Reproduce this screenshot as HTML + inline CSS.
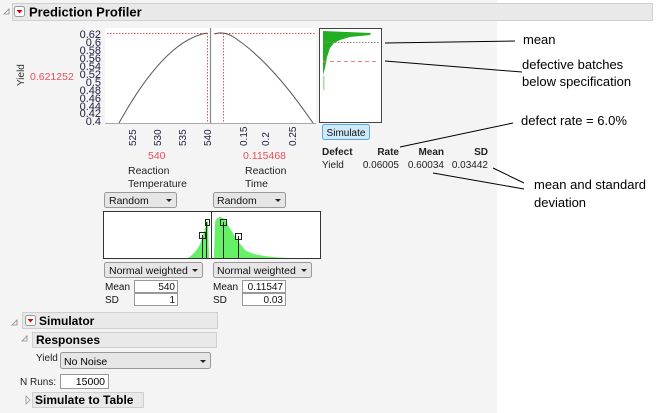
<!DOCTYPE html>
<html><head><meta charset="utf-8"><style>
html,body{margin:0;padding:0;width:666px;height:413px;overflow:hidden;background:#fff}
svg{display:block;font-family:"Liberation Sans",sans-serif}
</style></head><body>
<svg width="666" height="413" viewBox="0 0 666 413" xmlns="http://www.w3.org/2000/svg">
<rect x="0" y="0" width="497" height="413" fill="#f4f4f4"/>
<!-- header -->
<rect x="12.5" y="3.5" width="640" height="17" fill="#e9e9e9" stroke="#cfcfcf"/>
<path d="M4 14 L9 9 L9 14 Z" fill="none" stroke="#888" stroke-width="0.8"/>
<rect x="14.5" y="6.5" width="10" height="10" rx="2" fill="#fff" stroke="#999"/>
<path d="M16.5 10 L22.5 10 L19.5 13.5 Z" fill="#d00"/>
<text x="29" y="16.5" font-size="13" font-weight="bold" fill="#000">Prediction Profiler</text>
<!-- y axis -->
<text transform="translate(24,86) rotate(-90)" font-size="10" fill="#333">Yield</text>
<text x="30" y="80" font-size="10.5" fill="#e8505b">0.621252</text>
<g font-size="11" fill="#224" text-anchor="end">
<text x="101" y="38">0.62</text><text x="101" y="46">0.6</text><text x="101" y="54">0.58</text><text x="101" y="62">0.56</text><text x="101" y="70">0.54</text><text x="101" y="78">0.52</text><text x="101" y="86">0.5</text><text x="101" y="94">0.48</text><text x="101" y="102">0.46</text><text x="101" y="110">0.44</text><text x="101" y="117">0.42</text><text x="101" y="125">0.4</text>
</g>
<!-- plots -->
<rect x="105" y="28" width="104" height="95" fill="#fff"/>
<rect x="212" y="28" width="104" height="95" fill="#fff"/>
<line x1="210.5" y1="28" x2="210.5" y2="123" stroke="#888"/>
<line x1="105" y1="123.5" x2="316" y2="123.5" stroke="#aaa"/>
<line x1="107" y1="33.5" x2="207" y2="33.5" stroke="#e8505b" stroke-dasharray="1.5,1.5"/>
<line x1="207.5" y1="33" x2="207.5" y2="122" stroke="#e8505b" stroke-dasharray="1.5,1.5"/>
<line x1="214" y1="33.5" x2="315" y2="33.5" stroke="#e8505b" stroke-dasharray="1.5,1.5"/>
<line x1="223.5" y1="33" x2="223.5" y2="122" stroke="#e8505b" stroke-dasharray="1.5,1.5"/>
<path d="M119 123 Q165 40 207 33" fill="none" stroke="#555"/>
<path d="M215 34 Q222 31 232 36 Q270 60 313 123" fill="none" stroke="#555"/>
<g font-size="10" fill="#224">
<text transform="translate(136,146) rotate(-90)">525</text>
<text transform="translate(161,146) rotate(-90)">530</text>
<text transform="translate(186,146) rotate(-90)">535</text>
<text transform="translate(211,146) rotate(-90)">540</text>
<text transform="translate(247,146) rotate(-90)">0.15</text>
<text transform="translate(269,146) rotate(-90)">0.2</text>
<text transform="translate(296,146) rotate(-90)">0.25</text>
</g>
<text x="148" y="159" font-size="10.5" fill="#e8505b">540</text>
<text x="243" y="159" font-size="10.5" fill="#e8505b">0.115468</text>
<g font-size="10.5" fill="#222">
<text x="128" y="174">Reaction</text><text x="128" y="187">Temperature</text>
<text x="245" y="174">Reaction</text><text x="245" y="187">Time</text>
</g>
<!-- sim dist box -->
<rect x="319.5" y="28.5" width="62" height="94" fill="#fff" stroke="#444"/>
<path d="M323 32 L323 75 L325 68 L327 57 L330 48 L334 43 L340 40 L350 37 L370 35 L371 33 L323 31 Z" fill="#22b022"/>
<rect x="323" y="76" width="1.5" height="14" fill="#9ee09e"/>
<line x1="323" y1="42.5" x2="379" y2="42.5" stroke="#888" stroke-dasharray="1.5,1.5"/>
<line x1="323" y1="61.5" x2="379" y2="61.5" stroke="#e8808b" stroke-dasharray="4,3"/>
<!-- simulate button -->
<rect x="322.5" y="124.5" width="47" height="15" rx="2" fill="#cfe9f8" stroke="#5aa9d8"/>
<text x="346" y="136" font-size="10" text-anchor="middle" fill="#111">Simulate</text>
<g font-size="10" fill="#222">
<text x="322" y="155" font-weight="bold">Defect</text>
<text x="399" y="155" font-weight="bold" text-anchor="end">Rate</text>
<text x="444" y="155" font-weight="bold" text-anchor="end">Mean</text>
<text x="488" y="155" font-weight="bold" text-anchor="end">SD</text>
<text x="322" y="168">Yield</text>
<text x="399" y="168" text-anchor="end">0.06005</text>
<text x="444" y="168" text-anchor="end">0.60034</text>
<text x="488" y="168" text-anchor="end">0.03442</text>
</g>
<!-- annotations -->
<g stroke="#000" stroke-width="1">
<line x1="385" y1="43" x2="515" y2="41"/>
<line x1="385" y1="61" x2="522" y2="72"/>
<line x1="400" y1="147" x2="513" y2="123"/>
<line x1="433" y1="173" x2="524" y2="189"/>
<line x1="493" y1="168" x2="524" y2="183"/>
</g>
<g font-size="13" fill="#000">
<text x="523" y="44">mean</text>
<text x="522" y="69">defective batches</text>
<text x="522" y="86">below specification</text>
<text x="521" y="125">defect rate = 6.0%</text>
<text x="534" y="189">mean and standard</text>
<text x="534" y="207">deviation</text>
</g>
<!-- dropdowns -->
<g font-size="10.5" fill="#111">
<rect x="104.5" y="192.5" width="72" height="15" rx="2" fill="#e6e6e6" stroke="#999"/>
<text x="109" y="204">Random</text><path d="M166 199 L172 199 L169 202 Z" fill="#222"/>
<rect x="213.5" y="192.5" width="72" height="15" rx="2" fill="#e6e6e6" stroke="#999"/>
<text x="217" y="204">Random</text><path d="M275 199 L281 199 L278 202 Z" fill="#222"/>
</g>
<rect x="103.5" y="211.5" width="217" height="47" fill="#fff" stroke="#333"/>
<line x1="211.5" y1="211" x2="211.5" y2="258" stroke="#333"/>
<path d="M188 258 Q200 250 203 235 L206 225 L208 220 L209 258 Z" fill="#66f066"/>
<path d="M214 258 L215 222 Q219 213 225 220 Q235 238 245 250 Q255 257 290 258 Z" fill="#66f066"/>
<line x1="202.5" y1="235" x2="202.5" y2="258" stroke="#222"/>
<line x1="206.5" y1="222" x2="206.5" y2="258" stroke="#222"/>
<line x1="223.5" y1="222" x2="223.5" y2="258" stroke="#222"/>
<line x1="238.5" y1="236" x2="238.5" y2="258" stroke="#222"/>
<g fill="none" stroke="#222"><rect x="199.5" y="232.5" width="6" height="6"/><rect x="205.5" y="219.5" width="4" height="6"/><rect x="220.5" y="219.5" width="6" height="6"/><rect x="235.5" y="233.5" width="6" height="6"/></g>
<g font-size="10.5" fill="#111">
<rect x="104.5" y="262.5" width="98" height="15" rx="2" fill="#e6e6e6" stroke="#999"/>
<text x="109" y="274">Normal weighted</text><path d="M192 269 L198 269 L195 272 Z" fill="#222"/>
<rect x="213.5" y="262.5" width="98" height="15" rx="2" fill="#e6e6e6" stroke="#999"/>
<text x="217" y="274">Normal weighted</text><path d="M301 269 L307 269 L304 272 Z" fill="#222"/>
</g>
<g font-size="10" fill="#111">
<text x="105" y="290">Mean</text><text x="105" y="303">SD</text>
<rect x="134.5" y="280.5" width="43" height="12" fill="#fff" stroke="#999"/>
<rect x="134.5" y="293.5" width="43" height="12" fill="#fff" stroke="#999"/>
<text x="175" y="290" text-anchor="end">540</text><text x="175" y="303" text-anchor="end">1</text>
<text x="213" y="290">Mean</text><text x="213" y="303">SD</text>
<rect x="242.5" y="280.5" width="43" height="12" fill="#fff" stroke="#999"/>
<rect x="242.5" y="293.5" width="43" height="12" fill="#fff" stroke="#999"/>
<text x="283" y="290" text-anchor="end">0.11547</text><text x="283" y="303" text-anchor="end">0.03</text>
</g>
<!-- simulator -->
<path d="M12 325 L17 320 L17 325 Z" fill="none" stroke="#888" stroke-width="0.8"/>
<rect x="22.5" y="312.5" width="195" height="16" fill="#e9e9e9" stroke="#cfcfcf"/>
<rect x="25.5" y="315.5" width="10" height="10" rx="2" fill="#fff" stroke="#999"/>
<path d="M27.5 319 L33.5 319 L30.5 322.5 Z" fill="#d00"/>
<text x="39" y="325" font-size="12" font-weight="bold">Simulator</text>
<path d="M22 341 L27 336 L27 341 Z" fill="none" stroke="#888" stroke-width="0.8"/>
<rect x="32.5" y="332.5" width="184" height="15" fill="#e9e9e9" stroke="#cfcfcf"/>
<text x="36" y="344" font-size="12" font-weight="bold">Responses</text>
<text x="36" y="361" font-size="10" fill="#222">Yield</text>
<rect x="60.5" y="352.5" width="150" height="16" rx="2" fill="#e6e6e6" stroke="#999"/>
<text x="64" y="365" font-size="10.5">No Noise</text><path d="M200 360 L206 360 L203 363 Z" fill="#222"/>
<text x="20" y="385" font-size="10" fill="#222">N Runs:</text>
<rect x="60.5" y="374.5" width="48" height="14" fill="#fff" stroke="#999"/>
<text x="105" y="385" font-size="10.5" text-anchor="end">15000</text>
<path d="M26 396 L26 404 L30 400 Z" fill="none" stroke="#999" stroke-width="0.8"/>
<rect x="32.5" y="392.5" width="111" height="15" fill="#e9e9e9" stroke="#cfcfcf"/>
<text x="35" y="404" font-size="12" font-weight="bold">Simulate to Table</text>
</svg>
</body></html>
